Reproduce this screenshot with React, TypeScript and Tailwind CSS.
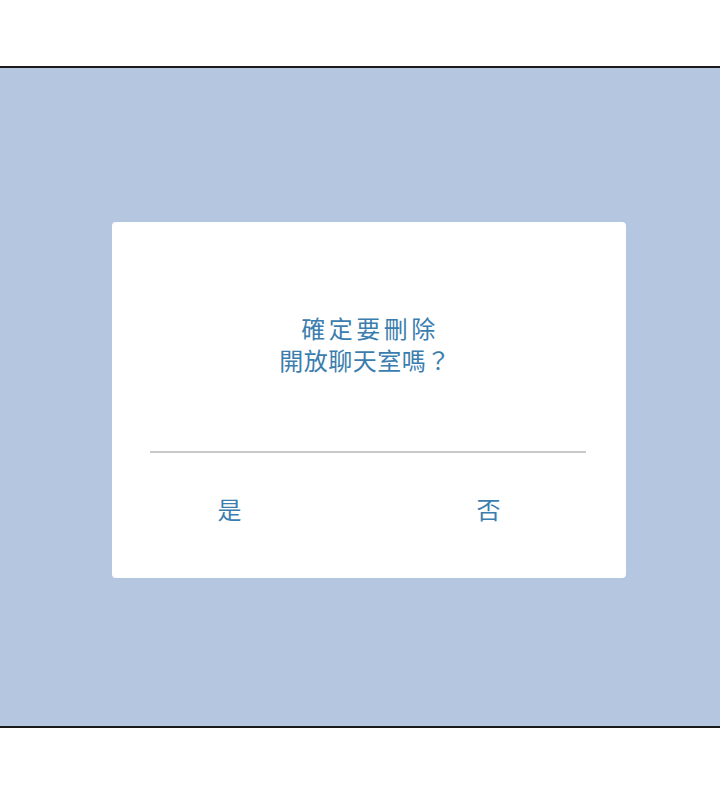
import React from 'react';

const App: React.FC = () => {
  return (
    <div
      className="w-[720px] h-[800px] flex flex-col bg-white"
      style={{ fontFamily: '"Noto Sans CJK TC", "Noto Sans", sans-serif' }}
    >
      <div className="h-[66px] bg-white" />
      <div className="h-[2px] bg-[#1a1a1a]" />
      <div className="h-[658px] bg-[#b5c6e1] pt-[154px] pl-[112px]">
        <div className="w-[514px] h-[356px] bg-white rounded-[4px] flex flex-col">
          <div className="pt-[90px] h-[229px] text-center text-[24px] leading-[32px] text-[#3b7dae]">
            <p className="tracking-[3.5px] pl-[2px]">確定要刪除</p>
            <p className="tracking-[0.5px] pr-[8px]">開放聊天室嗎？</p>
          </div>
          <div className="mx-[38px] w-[436px] h-[2px] bg-[#c9c9c9]" />
          <div className="flex pt-[40px] text-[24px] leading-[32px] text-[#3b7dae]">
            <button className="w-[236px] text-center">是</button>
            <button className="w-[280px] text-center pl-[4px]">否</button>
          </div>
        </div>
      </div>
      <div className="h-[2px] bg-[#1a1a1a]" />
      <div className="flex-1 bg-white" />
    </div>
  );
};

export default App;
